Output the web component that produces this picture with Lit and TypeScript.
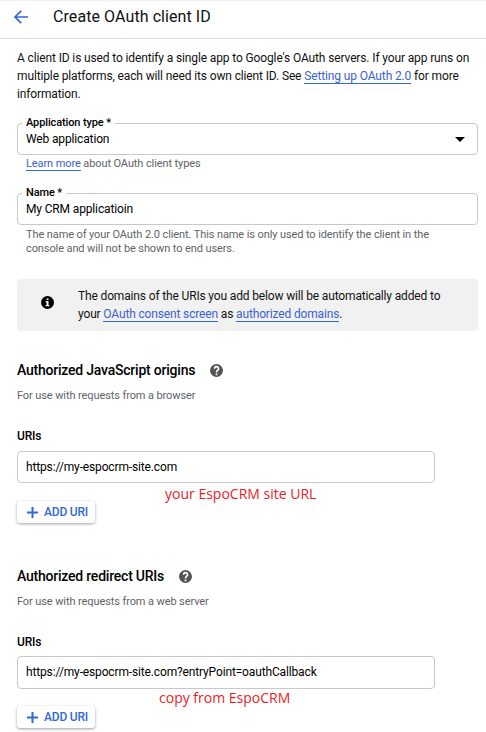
import { LitElement, html, css } from "lit";
import { customElement, property } from "lit/decorators.js";

@customElement("outlined-field")
class OutlinedField extends LitElement {
  @property() label = "";
  @property() value = "";
  @property({ type: Boolean }) dropdown = false;

  static styles = css`
    :host { display: block; }
    .box {
      position: relative;
      box-sizing: border-box;
      height: var(--field-height, 32px);
      border: 1px solid #c8c8c8;
      border-radius: 4px;
      display: flex;
      align-items: center;
      justify-content: space-between;
      padding: 0 12px var(--field-pad, 0px) 8px;
      font-size: 12px;
      letter-spacing: -0.145px;
      color: #000;
      white-space: nowrap;
    }
    .label {
      position: absolute;
      left: 4px;
      top: -8px;
      padding: 0 4px;
      background: #fff;
      font-size: 11px;
      font-weight: 500;
      line-height: 14px;
      letter-spacing: -0.12px;
    }
    .caret { display: block; }
  `;

  render() {
    return html`<div class="box">
      ${this.label ? html`<span class="label">${this.label}</span>` : ""}
      <span>${this.value}</span>
      ${this.dropdown
        ? html`<svg class="caret" width="10" height="5" viewBox="0 0 10 5"><path d="M0 0h10L5 5z" fill="#000" /></svg>`
        : ""}
    </div>`;
  }
}

@customElement("uri-section")
class UriSection extends LitElement {
  @property() heading = "";
  @property() hint = "";
  @property() value = "";
  @property() note = "";

  static styles = css`
    :host { display: block; position: relative; white-space: nowrap; }
    .head { display: flex; align-items: center; gap: 15px; height: 20px; }
    .title { font-size: 14px; font-weight: 500; line-height: 20px; letter-spacing: -0.22px; color: #000; }
    .hint { margin-top: 9px; font-size: 11px; line-height: 14px; letter-spacing: -0.1px; color: #5f6368; }
    .label { margin-top: 25px; font-size: 12px; font-weight: 500; line-height: 16px; letter-spacing: -0.2px; color: #000; }
    .field { width: 418px; margin-top: var(--field-gap, 7px); }
    .note {
      position: absolute;
      left: var(--note-x);
      top: var(--note-y);
      font: 14px/18px "Open Sans", sans-serif;
      color: #ed1c24;
    }
    .add {
      display: flex;
      align-items: center;
      gap: 6px;
      box-sizing: border-box;
      width: 78px;
      height: 22px;
      margin: var(--button-gap, 18px) 0 0;
      padding: 0 0 0 10px;
      border: 0;
      border-radius: 3px;
      background: #fff;
      box-shadow: 0 1px 3px rgba(0, 0, 0, 0.38);
      color: #3367d6;
      font: 500 12px/22px Roboto, sans-serif;
      letter-spacing: -0.2px;
      white-space: nowrap;
    }
  `;

  render() {
    return html`
      <div class="head">
        <span class="title">${this.heading}</span>
        <svg width="13" height="13" viewBox="2 2 20 20">
          <circle cx="12" cy="12" r="10" fill="#555" />
          <path fill="none" stroke="#fff" stroke-width="2.500" d="M8.900 9.300a3.100 3.100 0 1 1 4.600 2.500c-1 .7-1.500 1.200-1.500 3.200M12 16.700v2.500" />
        </svg>
      </div>
      <div class="hint">${this.hint}</div>
      <div class="label">URIs</div>
      <outlined-field class="field" .value=${this.value}></outlined-field>
      <div class="note">${this.note}</div>
      <button class="add">
        <svg width="11" height="11" viewBox="0 0 11 11"><path d="M5.500 0v11M0 5.500h11" stroke="#3367d6" stroke-width="2" /></svg>
        <span>ADD URI</span>
      </button>
    `;
  }
}

@customElement("app-root")
class AppRoot extends LitElement {
  static styles = css`
    :host {
      display: block;
      box-sizing: border-box;
      width: 486px;
      height: 732px;
      overflow: hidden;
      background: #fff;
      border-top: 1px solid #f1f1f1;
      font-family: Roboto, sans-serif;
      color: #111;
      white-space: nowrap;
    }
    .bar {
      display: flex;
      align-items: center;
      gap: 25px;
      box-sizing: border-box;
      height: 38px;
      padding: 0 0 6px 14px;
      border-bottom: 1px solid #dcdcdc;
    }
    .bar svg { display: block; }
    .page-title { font-size: 16px; line-height: 20px; letter-spacing: 0.08px; color: #111; }
    .content { padding: 10px 8px 0 17px; }
    .intro { margin: 0; font-size: 12px; line-height: 18px; letter-spacing: -0.13px; }
    .link { color: #3b62d0; border-bottom: 1px solid #3367d6; }
    .type { margin-top: 20px; }
    .help { padding-left: 9px; font-size: 11px; line-height: 14px; letter-spacing: -0.1px; color: #5f6368; }
    .type-help { margin-top: 2px; }
    .name { margin-top: 22px; }
    .name-help { margin-top: 3px; }
    .notice {
      display: flex;
      align-items: center;
      gap: 24px;
      box-sizing: border-box;
      height: 52px;
      margin-top: 23px;
      padding-left: 24px;
      border-radius: 4px;
      background: #f1f1f1;
      font-size: 12px;
      line-height: 18px;
      letter-spacing: -0.15px;
    }
    .notice svg { margin-bottom: 5px; }
    .origins { margin-top: 29px; --note-x: 148px; --note-y: 125px; }
    .redirects {
      margin-top: 43px;
      --note-x: 142px;
      --note-y: 123px;
      --field-height: 33px;
      --field-gap: 6px;
      --field-pad: 1px;
      --button-gap: 17px;
    }
  `;

  render() {
    return html`
      <header class="bar">
        <svg width="14" height="14" viewBox="0 0 14 14">
          <path d="M14 7H1.500M7.200 .8L1 7l6.200 6.200" fill="none" stroke="#3367d6" stroke-width="1.700" />
        </svg>
        <span class="page-title">Create OAuth client ID</span>
      </header>
      <main class="content">
        <p class="intro">
          A client ID is used to identify a single app to Google's OAuth servers. If your app runs on<br />multiple
          platforms, each will need its own client ID. See <span class="link">Setting up OAuth 2.0</span> for more<br />information.
        </p>
        <outlined-field class="type" label="Application type *" value="Web application" dropdown></outlined-field>
        <div class="help type-help"><span class="link">Learn more</span> about OAuth client types</div>
        <outlined-field class="name" label="Name *" value="My CRM applicatioin"></outlined-field>
        <div class="help name-help">
          The name of your OAuth 2.0 client. This name is only used to identify the client in the<br />console and will
          not be shown to end users.
        </div>
        <div class="notice">
          <svg width="13" height="13" viewBox="0 0 13 13">
            <circle cx="6.500" cy="6.500" r="6.500" fill="#000" />
            <path d="M5.500 2.500h2v1.600h-2zM4.600 5h2.900v4h.9v1.200H4.600V9h.9V6.200h-.9z" fill="#f1f1f1" />
          </svg>
          <div>
            The domains of the URIs you add below will be automatically added to<br />your
            <span class="link">OAuth consent screen</span> as <span class="link">authorized domains</span>.
          </div>
        </div>
        <uri-section
          class="origins"
          heading="Authorized JavaScript origins"
          hint="For use with requests from a browser"
          value="https://my-espocrm-site.com"
          note="your EspoCRM site URL"
        ></uri-section>
        <uri-section
          class="redirects"
          heading="Authorized redirect URIs"
          hint="For use with requests from a web server"
          value="https://my-espocrm-site.com?entryPoint=oauthCallback"
          note="copy from EspoCRM"
        ></uri-section>
      </main>
    `;
  }
}
